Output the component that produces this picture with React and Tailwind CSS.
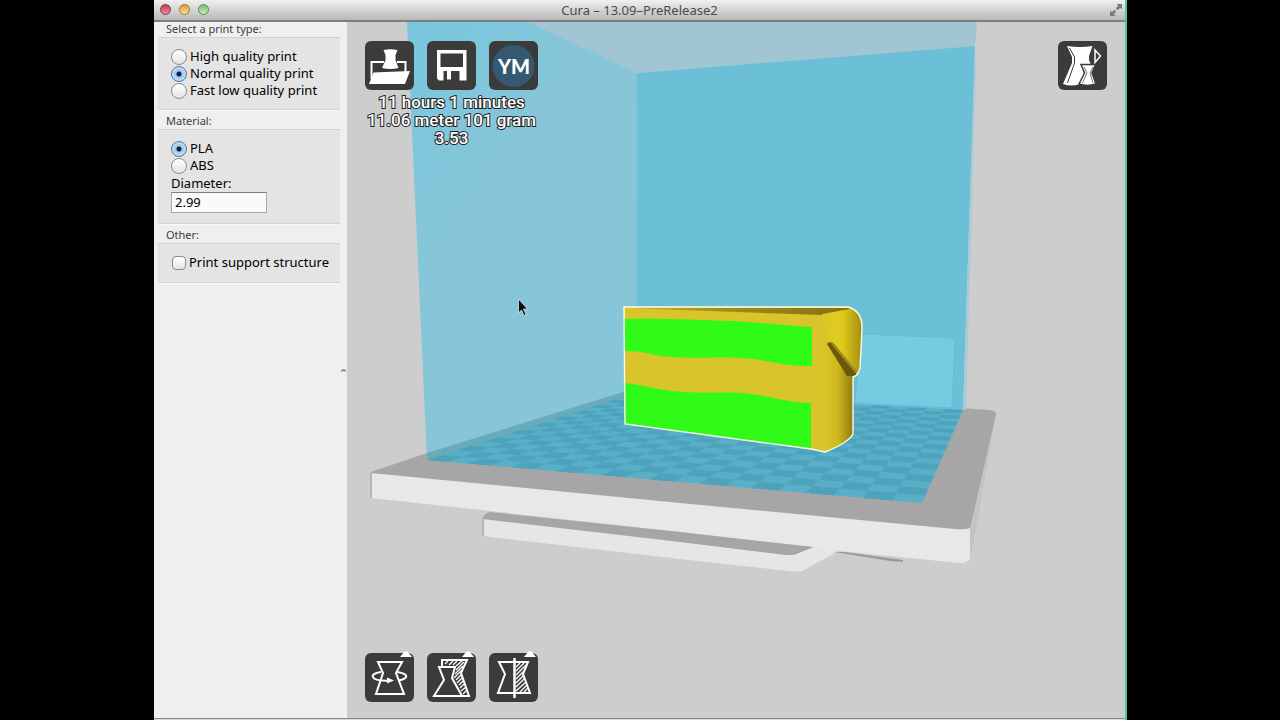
import React from "react";

const BED = [
  [427, 460],
  [636, 393],
  [963, 410],
  [922, 503],
];

// Projective mapping of the unit square onto the four bed corners.
function projector([p0, p1, p2, p3]) {
  const sx = p0[0] - p1[0] + p2[0] - p3[0];
  const sy = p0[1] - p1[1] + p2[1] - p3[1];
  const dx1 = p1[0] - p2[0];
  const dx2 = p3[0] - p2[0];
  const dy1 = p1[1] - p2[1];
  const dy2 = p3[1] - p2[1];
  const det = dx1 * dy2 - dx2 * dy1;
  const g = (sx * dy2 - dx2 * sy) / det;
  const h = (dx1 * sy - sx * dy1) / det;
  const a = p1[0] - p0[0] + g * p1[0];
  const b = p3[0] - p0[0] + h * p3[0];
  const d = p1[1] - p0[1] + g * p1[1];
  const e = p3[1] - p0[1] + h * p3[1];
  return (u, v) => {
    const w = g * u + h * v + 1;
    return `${((a * u + b * v + p0[0]) / w).toFixed(1)} ${((d * u + e * v + p0[1]) / w).toFixed(1)}`;
  };
}

function checkerPath(n) {
  const at = projector(BED);
  let path = "";
  for (let i = 0; i < n; i++) {
    for (let j = 0; j < n; j++) {
      if ((i + j) % 2) continue;
      path += `M${at(i / n, j / n)}L${at((i + 1) / n, j / n)}L${at((i + 1) / n, (j + 1) / n)}L${at(i / n, (j + 1) / n)}Z`;
    }
  }
  return path;
}

const CHECKER = checkerPath(20);

function Scene() {
  return (
    <svg
      className="absolute inset-0 h-full w-full"
      viewBox="347 22 778 696"
      preserveAspectRatio="xMidYMid slice"
      role="img"
      aria-label="3D view of the model on the print bed"
    >
      <defs>
        <linearGradient id="side" x1="0" x2="1">
          <stop offset="0" stopColor="#d9c727" />
          <stop offset="0.5" stopColor="#cfb91f" />
          <stop offset="1" stopColor="#8f7a0c" />
        </linearGradient>
        <linearGradient id="cap" x1="0" x2="1">
          <stop offset="0" stopColor="#dac728" />
          <stop offset="0.5" stopColor="#e0cb1c" />
          <stop offset="1" stopColor="#a58e10" />
        </linearGradient>
        <linearGradient id="top" x1="0" x2="1">
          <stop offset="0" stopColor="#cdb626" />
          <stop offset="0.4" stopColor="#a58f1a" />
          <stop offset="1" stopColor="#85710f" />
        </linearGradient>
        <linearGradient id="wall" x1="0" y1="0" x2="0.3" y2="0.4">
          <stop offset="0" stopColor="#78c7df" />
          <stop offset="1" stopColor="#86c6d8" />
        </linearGradient>
      </defs>
      <rect x="347" y="22" width="778" height="696" fill="#cdcdcd" />
      {/* platform */}
      <path d="M371 472L427 453L636 386L990 410Q997 411 996 415L971 525L970 530L955 530L371 475Z" fill="#a6a6a6" />
      <path d="M996 415L970 530V559L974 540Z" fill="#c3c3c3" />
      <path d="M371 473L680 503L955 529Q965 530 970 528V558Q968 563 960 563L830 550L680 532L500 512L371 498Z" fill="#e8e8e8" />
      <path d="M371 473V498" stroke="#b5b5b5" strokeWidth="2" />
      <path d="M483 519Q483 514 490 512L680 532L814 547L794 556L483 520Z" fill="#a6a6a6" />
      <path d="M483 519L680 542L785 555Q794 556 799 553L814 547L838 551L806 569Q800 573 788 571L680 559L483 536Z" fill="#e6e6e6" />
      <path d="M483 517V536" stroke="#b5b5b5" strokeWidth="2" />
      <path d="M834 552L845 552L903 560V562L890 561Z" fill="#9b9b9b" />
      {/* build volume */}
      <path d="M521 22L637 73L975 46L977 22Z" fill="#a1c5d3" />
      <path d="M407 22H528L637 73L636 393L427 460Z" fill="url(#wall)" />
      <path d="M637 73L975 46L963 410L636 393Z" fill="#6bc0d8" />
      <path d="M975 46L976 70L966 409L963 410Z" fill="#a9cbd6" />
      <path d="M860 334L955 338L952 408L855 403Z" fill="#76cbe3" stroke="#68bbd3" />
      <path d="M427 453L636 388V396L427 460Z" fill="#6baabb" />
      <path d="M427 460L636 393L963 410L922 503Z" fill="#57afc8" />
      <path d={CHECKER} fill="#4fa2bc" />
      {/* model */}
      <path d="M624 307L848 307Q863 311 862 330L860 368Q858 376 853 377V434Q848 443 825 452L811 449L625 424Z" fill="#d9c52b" />
      <path d="M624 308H848Q857 312 822 315Z" fill="url(#top)" />
      <path d="M822 330L853 360V434Q848 443 825 452Z" fill="url(#side)" />
      <path d="M822 314L850 309Q863 313 862 330L860 368Q858 376 849 375L829 343L826 330Z" fill="url(#cap)" />
      <path d="M827 344Q829 341 833 343L854 370Q858 375 855 376H847Z" fill="#6b590b" />
      <path d="M832 343L856 372" stroke="#a08a17" strokeWidth="2.500" />
      <path d="M624 319C660 318 700 320 730 321C760 322 790 326 812 327V366C785 367 765 359 740 358C715 356 680 360 655 355Q640 351 624 351Z" fill="#30fb18" />
      <path d="M625 383C645 385 660 391 685 392C710 394 730 391 750 394C775 397 790 403 811 403V449L625 424Z" fill="#30fb18" />
      <path
        d="M624 307L848 307Q863 311 862 330L860 368Q858 376 853 377V434Q848 443 825 452L811 449L625 424Z"
        fill="none"
        stroke="#fbfbe4"
        strokeWidth="1.4"
      />
      {/* pointer */}
      <path d="M518.500 299V313L521.500 310L524 315.500L526 314.500L523.500 309H527.500Z" fill="#0b0b12" stroke="#e5f3f8" strokeWidth="0.7" />
    </svg>
  );
}

function ToolButton({ label, flyout, children }) {
  return (
    <button type="button" aria-label={label} className="relative size-[49px] shrink-0 rounded-md bg-[#3b3b3b]">
      <svg viewBox="0 0 49 49" className="size-full" fill="none" stroke="#fff" strokeWidth="2">
        {children}
      </svg>
      {flyout && (
        <svg viewBox="0 0 12 6" className="absolute -top-0.5 right-0.5 h-1.5 w-3" fill="#fff">
          <path d="M0 6L4.500 0.500H7.500L12 6Z" />
        </svg>
      )}
    </button>
  );
}

function Group({ title, children }) {
  return (
    <fieldset className="mb-1 min-w-0">
      <legend className="h-[15px] pl-2 text-[11px] leading-[13px] text-[#3c3c3c]">{title}</legend>
      <div className="border-y border-l border-[#d2d2d2] border-l-[#dcdcdc] bg-[#e4e4e4] px-3 py-2.5 shadow-[0_1px_0_#f8f8f8]">
        {children}
      </div>
    </fieldset>
  );
}

function Radio({ name, label, checked }) {
  return (
    <label className="flex h-[17px] items-center gap-[3px] whitespace-nowrap">
      <input
        type="radio"
        name={name}
        defaultChecked={checked}
        className="size-4 shrink-0 appearance-none rounded-full border border-[#8b8b8b] bg-linear-to-b from-white to-[#e4e4e4] checked:border-[#5b7693] checked:bg-[radial-gradient(circle,#10223f_0_2px,#9cc4ea_3px,#b9dcf5_6px)]"
      />
      {label}
    </label>
  );
}

function TitleBar() {
  return (
    <header className="grid h-[22px] shrink-0 grid-cols-[1fr_auto_1fr] items-center border-b-2 border-[#7d7d7d] bg-linear-to-b from-[#f0f0f0] to-[#b9b9b9] pb-px">
      <div className="flex gap-2 pl-1.5">
        <button type="button" aria-label="Close" className="size-[11px] rounded-full border border-[#8c3444] bg-linear-to-b from-[#c0405a] to-[#f08a98]" />
        <button type="button" aria-label="Minimize" className="size-[11px] rounded-full border border-[#a3702a] bg-linear-to-b from-[#d99a42] to-[#fbe38f]" />
        <button type="button" aria-label="Zoom" className="size-[11px] rounded-full border border-[#5c8a4c] bg-linear-to-b from-[#7fb86d] to-[#c8f0b4]" />
      </div>
      <h1 className="text-[13px] leading-[18px] text-[#4a4a4a]">Cura – 13.09–PreRelease2</h1>
      <button type="button" aria-label="Full screen" className="mr-0.5 justify-self-end">
        <svg viewBox="0 0 14 14" className="size-3.5" fill="#7a7a7a">
          <path d="M7.500 1H13V6.500L11.200 4.700L8.700 7.200L6.800 5.300L9.300 2.800Z" />
          <path d="M6.500 13H1V7.500L2.800 9.300L5.300 6.800L7.200 8.700L4.700 11.200Z" />
        </svg>
      </button>
    </header>
  );
}

function Sidebar() {
  return (
    <form className="w-[186px] shrink-0 bg-[#efefef] pl-1 text-[13px] text-black">
      <Group title="Select a print type:">
        <Radio name="quality" label="High quality print" />
        <Radio name="quality" label="Normal quality print" checked />
        <Radio name="quality" label="Fast low quality print" />
      </Group>
      <Group title="Material:">
        <Radio name="material" label="PLA" checked />
        <Radio name="material" label="ABS" />
        <label htmlFor="diameter" className="block leading-[18px]">
          Diameter:
        </label>
        <input
          id="diameter"
          type="text"
          defaultValue="2.99"
          className="block h-[21px] w-24 border border-[#a9a9a9] border-t-[#7e7e7e] bg-[#fafafa] px-[3px] pb-px"
        />
      </Group>
      <Group title="Other:">
        <label className="flex h-[18px] items-center gap-[3px] pl-px whitespace-nowrap">
          <input
            type="checkbox"
            className="size-3.5 shrink-0 appearance-none rounded-sm border border-[#8b8b8b] bg-linear-to-b from-white to-[#e6e6e6]"
          />
          Print support structure
        </label>
      </Group>
    </form>
  );
}

function Sash() {
  return (
    <div role="separator" aria-orientation="vertical" className="flex w-[7px] shrink-0 items-center justify-center bg-[#efefef]">
      <svg viewBox="0 0 5 3" className="h-[3px] w-[5px]" fill="#8a8a8a">
        <path d="M0 3Q0 0 2.500 0Q5 0 5 3L2.500 2Z" />
      </svg>
    </div>
  );
}

export default function App() {
  return (
    <div className="flex min-h-screen bg-black pr-[153px] pl-[154px] font-['Noto_Sans',sans-serif]">
      <div className="flex min-w-0 flex-1 flex-col border-r-2 border-[#3fd39b]">
        <TitleBar />
        <div className="flex flex-1">
          <Sidebar />
          <Sash />
          <main className="relative flex flex-1 flex-col justify-between overflow-hidden bg-[#cdcdcd] px-[18px] pt-[19px] pb-4">
            <Scene />
            <div className="relative flex items-start justify-between">
              <div>
                <div className="flex gap-[13px]">
                  <ToolButton label="Load model">
                    <g fill="#fff" stroke="none">
                      <path d="M4 43L8.500 31.500L45 30L40 43Z" />
                      <path d="M18.500 9Q25 7.500 32.500 9L30.500 14V19L33.500 27Q25 29 17 27L20.500 19V14Z" />
                    </g>
                    <path d="M19 21H6.500V38M32 21H40.500V31" />
                  </ToolButton>
                  <ToolButton label="Save toolpath">
                    <path
                      d="M10 9H39.500V39.500H32.500V30H24V38.500H20V30H16.500V39.500H12L10 37.500ZM13.500 12.500V26H36V12.500Z"
                      fill="#fff"
                      fillRule="evenodd"
                      stroke="none"
                    />
                  </ToolButton>
                  <ToolButton label="Share on YouMagine">
                    <circle cx="24.500" cy="25" r="21" fill="#345970" stroke="none" />
                    <text x="25" y="33" textAnchor="middle" fill="#fff" stroke="none" className="font-['Lato'] text-[20px] font-black">
                      YM
                    </text>
                  </ToolButton>
                </div>
                <p className="mt-[3px] text-center font-['Roboto'] text-[17px] leading-[18px] font-medium whitespace-nowrap text-white [-webkit-text-stroke:2px_#222] [paint-order:stroke_fill]">
                  11 hours 1 minutes
                  <br />
                  11.06 meter 101 gram
                  <br />
                  3.53
                </p>
              </div>
              <ToolButton label="View mode">
                <path d="M9 5Q22 7 34.500 5L31 15V19L33 24H24L26 32L22 43Q13 46 5 43L14 22V16Z" fill="#fff" stroke="none" />
                <path d="M11.500 7L16.500 16V22L9.500 42" stroke="#3b3b3b" strokeWidth="1" />
                <path d="M23 23.500H37.500L34 32L38 43Q29 46 21 43L26.500 32Z" fill="#fff" stroke="#3b3b3b" strokeWidth="1.500" />
                <path d="M26 26L29 32L24.500 42M35 26L32 32L35 42" stroke="#3b3b3b" strokeWidth="0.700" />
                <path d="M37 9L42.500 15L37 21.500Z" strokeWidth="1.500" />
              </ToolButton>
            </div>
            <div className="relative flex gap-[13px]">
              <ToolButton label="Rotate" flyout>
                <path d="M13 9H37L31 20L39 41H11L18 20Z" />
                <path d="M16 19C9 20 7 22 8 24C9 27 17 28 26 27.500M32 19C39 20 42 22 41 24C40 26 37 27 33 27.500" />
                <path d="M22 24.500L29 27.500L22 30.500Z" fill="#fff" stroke="none" />
              </ToolButton>
              <ToolButton label="Scale" flyout>
                <path d="M12 14H28L25 25L35 43H7L17 27Z" />
                <path d="M15 13V7H40L34 20L42 43H35" />
                <path
                  d="M18 11L21 8M22 12L26 8M26 12L30 8M29 13L35 8M29 17L37 9M28 21L36 13M27 25L34 18M29 27L34 22M30 30L35 25M32 32L36 28M33 35L37 31M34 38L39 34M36 41L40 37"
                  strokeWidth="1.300"
                />
              </ToolButton>
              <ToolButton label="Mirror" flyout>
                <path d="M25 9H10L16 21L9 40H25M26 9H39L34 21L41 40H26" />
                <path d="M25.500 5V45" strokeWidth="2.500" />
                <path
                  d="M27 14L31 10M27 18L35 10M27 22L37 12M27 26L35 18M27 30L35 22M27 34L36 25M27 38L37 29M31 39L38 32M35 39L39 35"
                  strokeWidth="1.300"
                />
              </ToolButton>
            </div>
          </main>
        </div>
        <footer className="h-0.5 shrink-0 border-t border-[#8a8a8a] bg-[#d8d8d8]" />
      </div>
    </div>
  );
}
